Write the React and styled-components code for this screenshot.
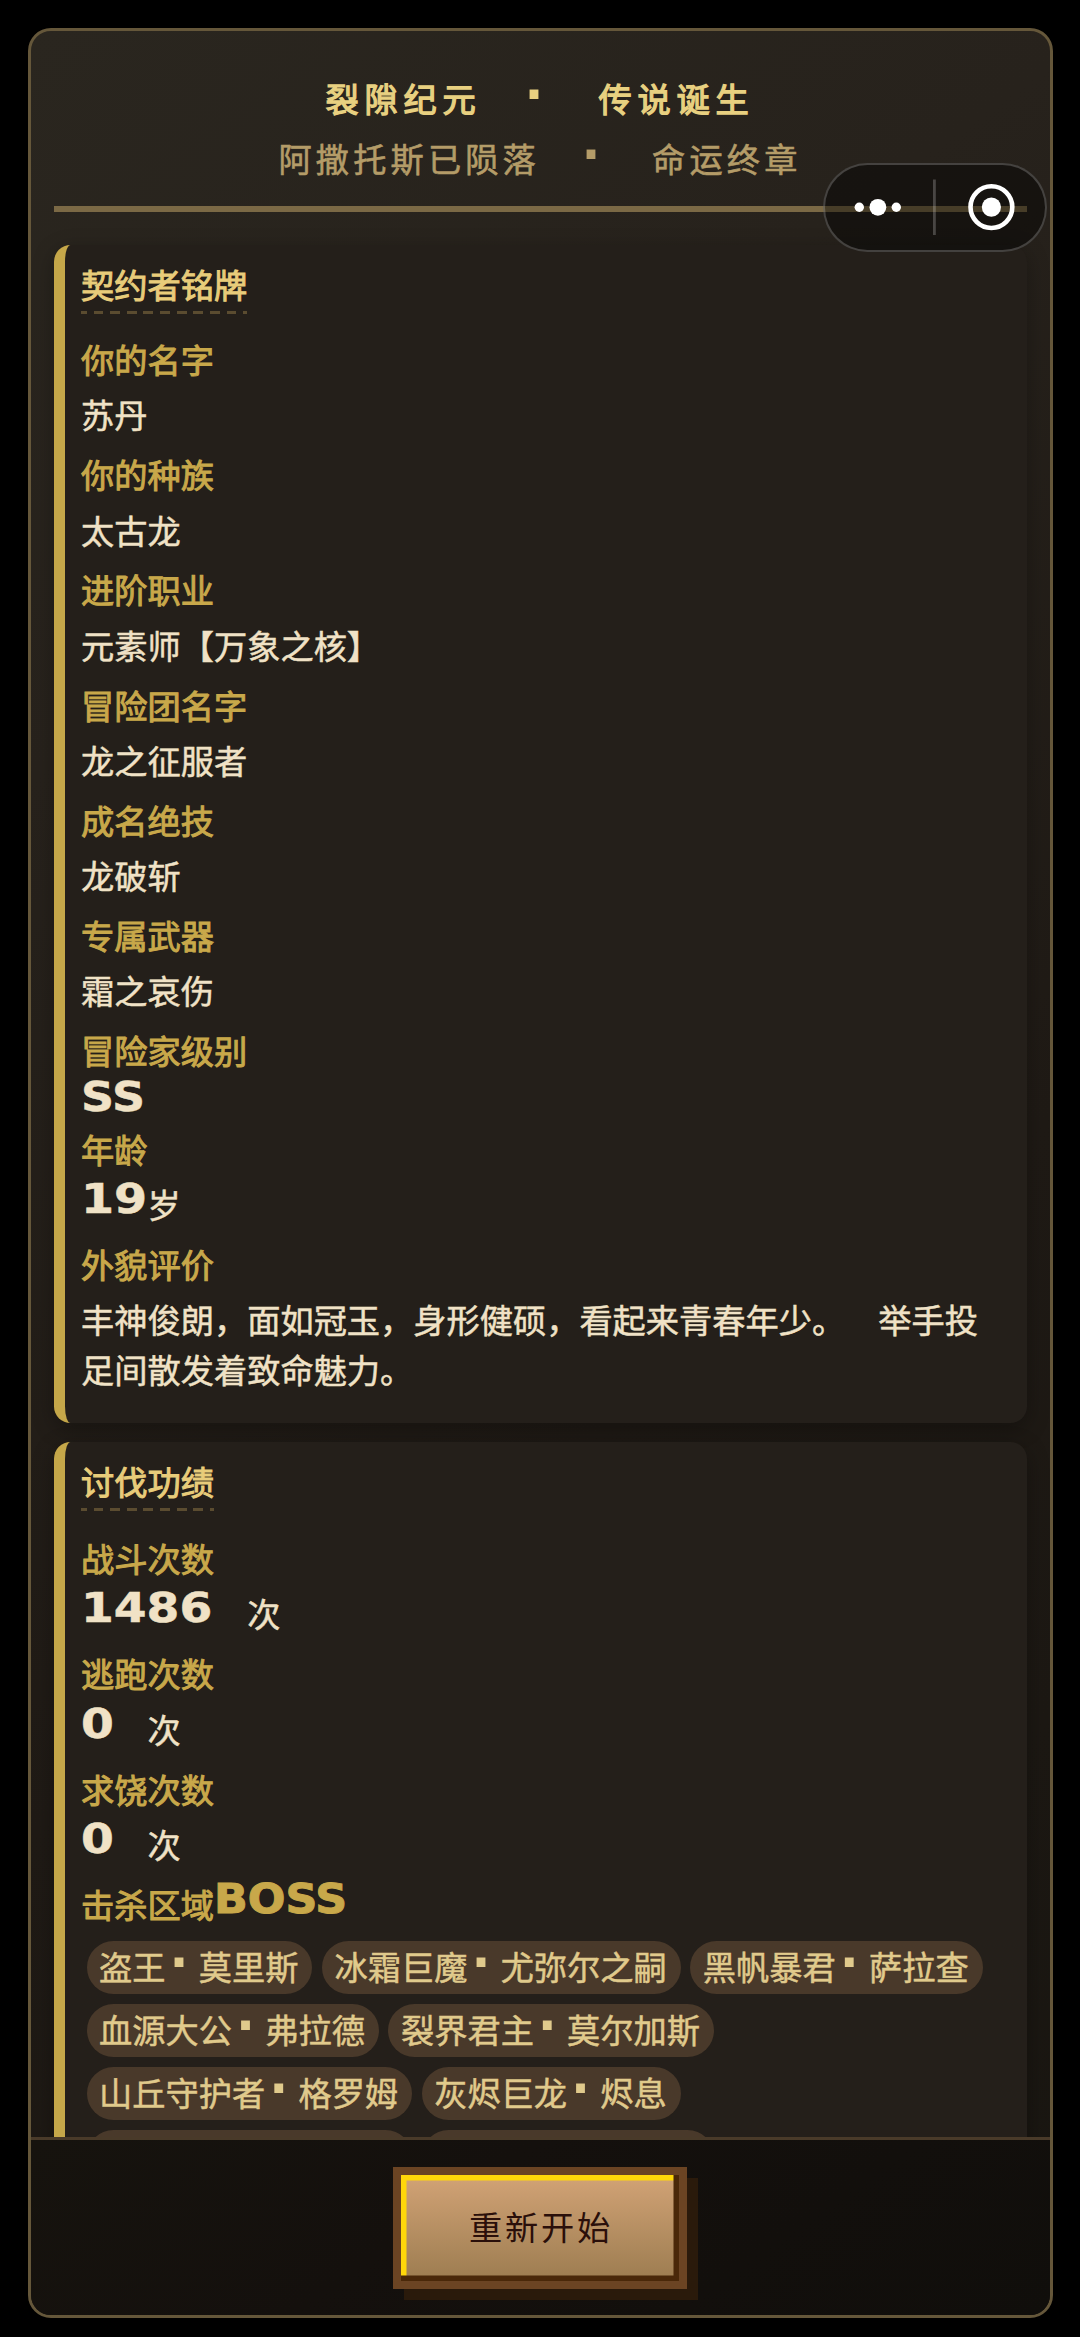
//Packages
import React from 'react';
import styled, { createGlobalStyle } from 'styled-components';

const GlobalStyle = createGlobalStyle`
  * {
    box-sizing: border-box;
  }

  body {
    margin: 0;
    background: #000;
    font-family: 'Noto Sans CJK SC', sans-serif;
    font-size: 33.23px;
    line-height: 49.85px;
    text-spacing-trim: space-all;
  }
`;

const Screen = styled.div`
  height: 2337px;
  padding: 28px 27.5px 19px;
  overflow: hidden;
`;

const Panel = styled.main`
  display: flex;
  flex-direction: column;
  height: 100%;
  border: 3px solid #65573a;
  border-radius: 23px;
  background: linear-gradient(145deg, #2a261f 0%, #27221c 25%, #1f1a15 60%, #191611 100%);
  overflow: hidden;
`;

const Content = styled.div`
  flex: 1;
  min-height: 0;
  padding: 22px 23px 0;
  overflow: hidden;
`;

const Header = styled.header`
  height: 159px;
  padding-top: 20.4px;
  border-bottom: 6px solid #7b6945;
  text-align: center;
  white-space: nowrap;
`;

const Heading = styled.h1`
  margin: 0 0 10px;
  color: #e8d080;
  font-size: inherit;
  font-weight: 400;
  letter-spacing: 5.8px;
  -webkit-text-stroke: 1.3px;
`;

const SubHeading = styled.p`
  margin: 0;
  color: #b49c68;
  font-weight: 400;
  letter-spacing: 4.15px;
  -webkit-text-stroke: 0.6px;
`;

const Dot = styled.span`
  display: inline-block;
  width: 33.23px;
  margin-right: ${props => props.$spacing || 0}px;
  padding-left: 4px;
  font-family: 'DejaVu Sans', sans-serif;
  font-size: 50px;
  font-weight: 700;
  letter-spacing: 0;
  line-height: 0;
  text-align: left;
  -webkit-text-stroke: 0;
`;

const Wide = styled.span`
  white-space: pre;
`;

const Card = styled.section`
  margin-top: ${props => props.$first ? 33 : 19}px;
  padding: 16.6px 16.6px 19px;
  border-left: 11px solid #c5a749;
  border-radius: 16.6px;
  background: #241f1a;
  box-shadow: 0 6px 22px rgba(0, 0, 0, 0.3);
`;

const CardTitle = styled.h2`
  width: fit-content;
  margin: -3px 0 ${props => props.$gap}px;
  padding-bottom: 6px;
  background: repeating-linear-gradient(
    to right,
    #5b4c30 0 5.8px,
    transparent 5.8px 12.6px,
    #5b4c30 12.6px 16.62px
  ) left bottom / 100% 3px no-repeat;
  color: #e8cc7a;
  font-size: inherit;
  font-weight: 400;
  -webkit-text-stroke: 1px;
`;

const Row = styled.div`
  margin-bottom: 10px;
`;

const Label = styled.div`
  margin-bottom: 5.5px;
  color: #c8a84a;
  -webkit-text-stroke: 1px;
`;

const Value = styled.div`
  height: ${props => props.$short ? '33.2px' : 'auto'};
  line-height: ${props => props.$short ? '33.2px' : 'inherit'};
  color: #f0e2c6;
  -webkit-text-stroke: 0.5px;
`;

const Arcade = styled.span`
  display: inline-block;
  width: ${props => props.$cells * 33.23}px;
  font-family: 'DejaVu Sans', sans-serif;
  font-size: 41px;
  font-weight: 700;
  line-height: 0;
  white-space: nowrap;
  vertical-align: ${props => props.$raise || 5}px;
  transform: scaleX(${props => props.$stretch});
  transform-origin: left;
`;

const TagList = styled.div`
  display: flex;
  flex-wrap: wrap;
  gap: 9.6px;
  padding: 6.5px 0 0 5.5px;
`;

const Tag = styled.span`
  height: 53.4px;
  min-width: ${props => props.$width || 0}px;
  padding: 0.5px 14px 0 12.5px;
  border-radius: 27px;
  background: #49392a;
  color: #e0ca8c;
  white-space: nowrap;
  -webkit-text-stroke: 0.5px;
`;

const Footer = styled.footer`
  display: flex;
  justify-content: center;
  flex: none;
  height: 178px;
  padding-top: 27px;
  border-top: 3px solid #493a29;
  background: linear-gradient(145deg, #16130e, #14100d 40%, #100e0b);
`;

const RestartButton = styled.button`
  width: 294px;
  height: 122px;
  padding: 0 0 5px 2px;
  border: 8.3px solid #6b4423;
  border-radius: 0;
  background: linear-gradient(#d2a376, #9c7c50);
  box-shadow: inset -5.5px -5.5px 0 #4a2809, inset 5.5px 5.5px 0 #ffd70a, 11px 11px 0 #2a1a0b;
  color: #2a0f0a;
  font: inherit;
  letter-spacing: 2.77px;
`;

// floats over the panel, in the top right corner
const Capsule = styled.div`
  position: absolute;
  top: 163px;
  left: 822.5px;
  width: 224px;
  height: 89px;
  border: 2.5px solid rgba(255, 255, 255, 0.2);
  border-radius: 44.5px;
  background: rgba(0, 0, 0, 0.42);
`;

const profile = [
  { label: '你的名字', value: '苏丹' },
  { label: '你的种族', value: '太古龙' },
  { label: '进阶职业', value: '元素师【万象之核】' },
  { label: '冒险团名字', value: '龙之征服者' },
  { label: '成名绝技', value: '龙破斩' },
  { label: '专属武器', value: '霜之哀伤' },
  { label: '冒险家级别', value: <Arcade $cells={2} $stretch={1.12} $raise={0.1}>SS</Arcade>, short: true },
  { label: '年龄', value: <><Arcade $cells={2} $stretch={1.16}>19</Arcade>岁</> },
  { label: '外貌评价', value: '丰神俊朗，面如冠玉，身形健硕，看起来青春年少。　举手投足间散发着致命魅力。' }
];

const battles = [
  { label: '战斗次数', count: '1486' },
  { label: '逃跑次数', count: '0' },
  { label: '求饶次数', count: '0' }
];

const bosses = [
  ['盗王', '莫里斯'],
  ['冰霜巨魔', '尤弥尔之嗣'],
  ['黑帆暴君', '萨拉查'],
  ['血源大公', '弗拉德'],
  ['裂界君主', '莫尔加斯'],
  ['山丘守护者', '格罗姆'],
  ['灰烬巨龙', '烬息']
];

const MenuCapsule = () => (
  <Capsule>
    <svg width="219" height="84" viewBox="825 165.5 219 84" fill="#fff">
      <circle cx="859.3" cy="207.8" r="4.7" />
      <circle cx="877.9" cy="207.8" r="8.4" />
      <circle cx="896.3" cy="207.8" r="4.7" />
      <rect x="933" y="180" width="2.8" height="55.5" opacity="0.22" />
      <circle cx="991.4" cy="207.6" r="20.9" fill="none" stroke="#fff" strokeWidth="4.6" />
      <circle cx="991.4" cy="207.6" r="9.6" />
    </svg>
  </Capsule>
);

const App = () => (
  <Screen>
    <GlobalStyle />
    <Panel>
      <Content>
        <Header>
          <Heading>
            裂隙纪元<Wide>　</Wide><Dot $spacing={5.8}>·</Dot><Wide>　</Wide>传说诞生
          </Heading>
          <SubHeading>
            阿撒托斯已陨落<Wide>　</Wide><Dot $spacing={4.15}>·</Dot><Wide>　</Wide>命运终章
          </SubHeading>
        </Header>

        <Card $first>
          <CardTitle $gap={19.6}>契约者铭牌</CardTitle>
          {profile.map(item => (
            <Row key={item.label}>
              <Label>{item.label}</Label>
              <Value $short={item.short}>{item.value}</Value>
            </Row>
          ))}
        </Card>

        <Card>
          <CardTitle $gap={21.8}>讨伐功绩</CardTitle>
          {battles.map(item => (
            <Row key={item.label}>
              <Label>{item.label}</Label>
              <Value>
                <Arcade $cells={item.count.length} $stretch={1.15}>{item.count}</Arcade>
                <Wide>　</Wide>次
              </Value>
            </Row>
          ))}
          <Label>击杀区域<Arcade $cells={4} $stretch={1.08}>BOSS</Arcade></Label>
          <TagList>
            {bosses.map(([title, name]) => (
              <Tag key={name}>{title}<Dot>·</Dot>{name}</Tag>
            ))}
            <Tag $width={325.6} />
            <Tag $width={292.4} />
          </TagList>
        </Card>
      </Content>

      <Footer>
        <RestartButton>重新开始</RestartButton>
      </Footer>
    </Panel>
    <MenuCapsule />
  </Screen>
);

export default App;
